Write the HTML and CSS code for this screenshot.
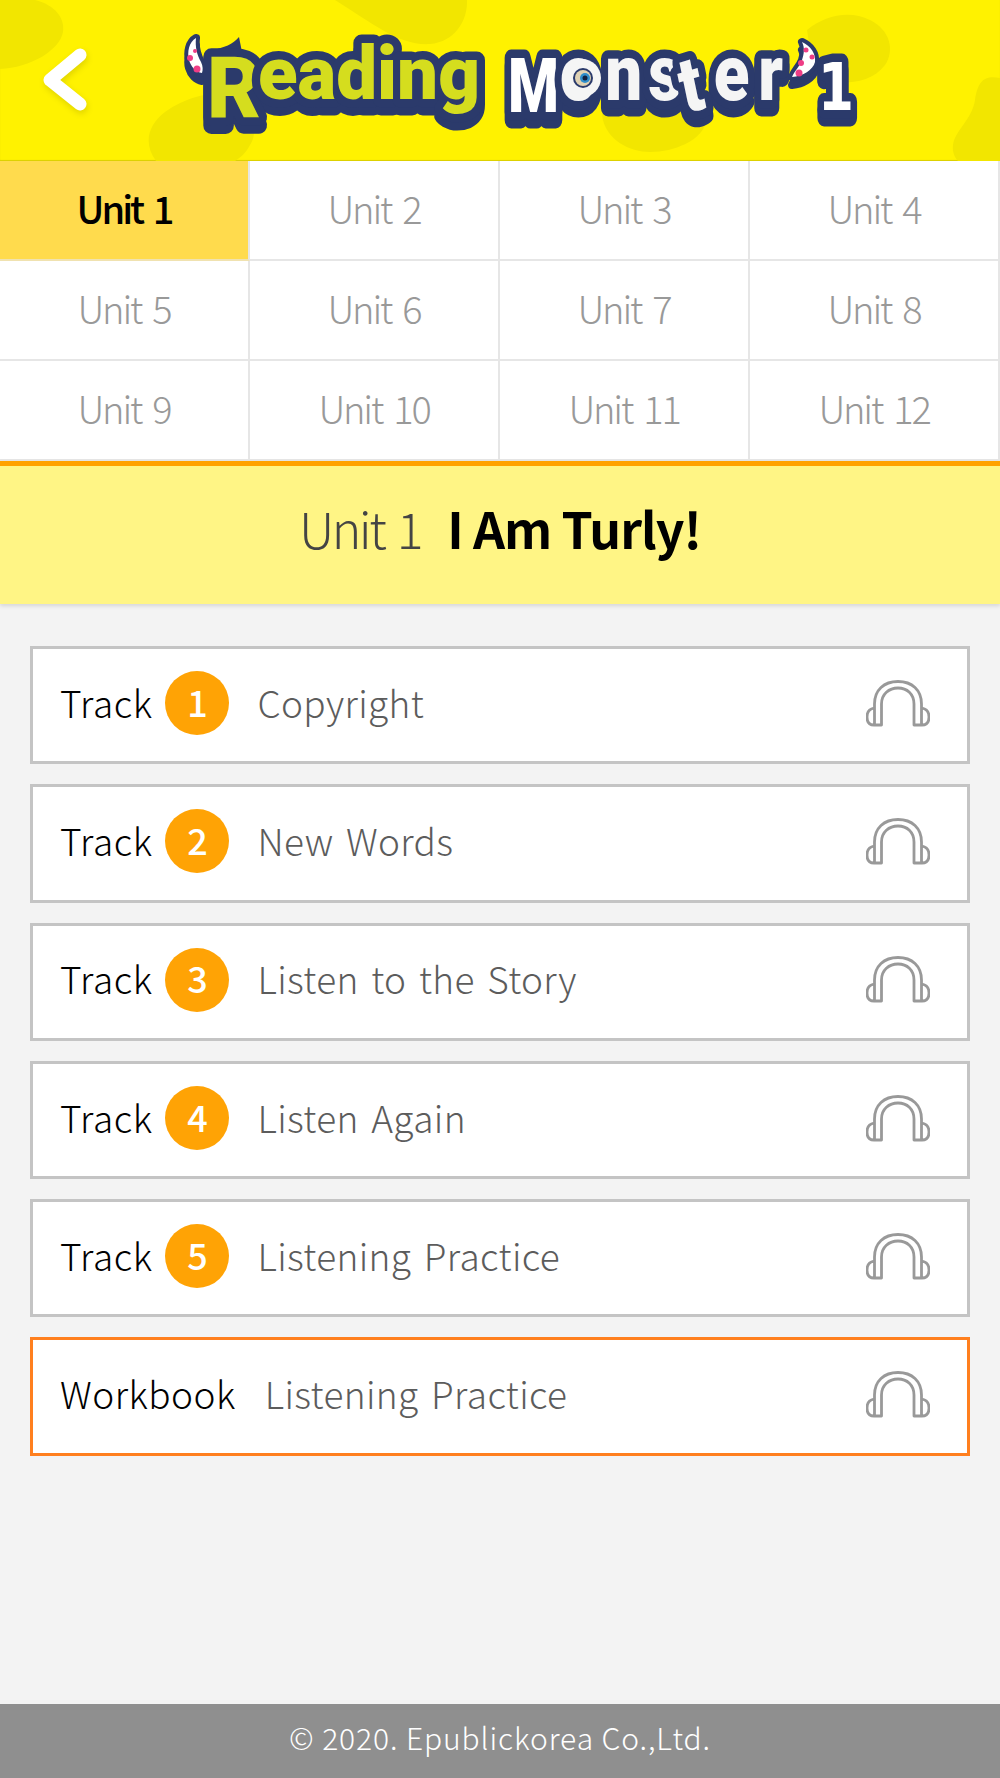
FILE: index.html
```html
<!DOCTYPE html>
<html lang="en">

<head>
    <meta charset="UTF-8">
    <meta name="viewport" content="width=device-width, initial-scale=1.0">
    <title>Reading Monster 1</title>
    <link rel="stylesheet" href="styles.css">
</head>

<body>
    <header class="top">
        <svg class="blobs" viewBox="0 0 1000 161" width="1000" height="161" aria-hidden="true">
            <path d="M0 0H35C55 5 65 18 63 32C60 50 30 68 0 69Z" />
            <path d="M335 0H467C468 20 455 42 430 44C400 46 375 25 335 0Z" />
            <path d="M156 161C143 143 148 125 165 112C185 98 205 92 240 92C250 110 260 130 250 145C246 153 240 158 235 161Z" />
            <path d="M807 30C825 15 850 10 870 20C890 30 895 50 885 65C870 85 840 85 815 80Z" />
            <path d="M602 115C605 140 630 152 650 152C675 152 700 140 705 125L700 100L610 100Z" />
            <path d="M1000 78C985 75 978 80 975 100C972 120 955 130 953 145C952 152 955 158 958 161H1000Z" />
        </svg>
        <a class="back">
            <svg viewBox="0 0 60 80" width="60" height="80" aria-hidden="true">
                <polyline points="40,14 10,39 40,63" fill="none" stroke="#fff" stroke-width="13" stroke-linecap="round" stroke-linejoin="round" />
            </svg>
        </a>
        <svg class="logo" viewBox="175 25 700 115" width="700" height="115" role="img" aria-label="Reading Monster 1">
            <g class="logo-base">
                <!-- horns and the tuft on the R -->
                <path class="horn" d="M196 38C189 42 187 52 189 60C191 67 196 72 202 73C203 70 203 66 201 62C197 55 195 47 196 38Z" />
                <path class="horn" d="M802 42C811 46 816 54 815 62C813 70 803 76 792 77C795 70 800 66 802 60C804 54 805 48 802 42Z" />
                <path class="tuft" d="M212 50C224 48 233 44 239 37L242 52Z" />
                <text class="logo-big" x="207" y="117" textLength="54" lengthAdjust="spacingAndGlyphs">R</text>
                <text class="logo-read" x="258" y="99" textLength="222" lengthAdjust="spacingAndGlyphs">eading</text>
                <text class="logo-m" x="508" y="112" textLength="51" lengthAdjust="spacingAndGlyphs">M</text>
                <text class="logo-mon" transform="translate(560 100) scale(.84 1)" x="0 54 105 149 183 236" y="0" rotate="0 0 0 -14 0 0" dy="0 0 0 14 -14 0">onster</text>
                <text class="logo-one" x="818" y="110" textLength="36" lengthAdjust="spacingAndGlyphs">1</text>
            </g>
            <path fill="#fff" d="M196 38C189 42 187 52 189 60C191 67 196 72 202 73C203 70 203 66 201 62C197 55 195 47 196 38Z" />
            <g fill="#ee3d86">
                <circle cx="190" cy="58" r="3" />
                <circle cx="197" cy="69" r="3.5" />
                <circle cx="195" cy="51" r="2" />
            </g>
            <path fill="#fff" d="M802 42C811 46 816 54 815 62C813 70 803 76 792 77C795 70 800 66 802 60C804 54 805 48 802 42Z" />
            <g fill="#ee3d86">
                <circle cx="806" cy="50" r="2.5" />
                <circle cx="812" cy="57" r="2.5" />
                <circle cx="801" cy="63" r="3" />
                <circle cx="799" cy="73" r="3.5" />
            </g>
            <!-- eye -->
            <circle cx="582" cy="78" r="19" fill="#f5f5f5" />
            <circle cx="583" cy="78" r="10" fill="#2b3a6b" />
            <circle cx="583" cy="78" r="8" fill="#e0d2b4" />
            <circle cx="585" cy="78" r="5" fill="#2f8ecb" />
            <circle cx="585" cy="78" r="2.5" fill="#12203f" />
        </svg>
    </header>

    <nav class="units">
        <a class="unit on">Unit 1</a>
        <a class="unit">Unit 2</a>
        <a class="unit">Unit 3</a>
        <a class="unit">Unit 4</a>
        <a class="unit">Unit 5</a>
        <a class="unit">Unit 6</a>
        <a class="unit">Unit 7</a>
        <a class="unit">Unit 8</a>
        <a class="unit">Unit 9</a>
        <a class="unit">Unit 10</a>
        <a class="unit">Unit 11</a>
        <a class="unit">Unit 12</a>
    </nav>

    <h1 class="banner"><span class="banner-unit">Unit 1</span><strong>I Am Turly!</strong></h1>

    <main class="list">
        <a class="item">
            <span class="label">Track</span><span class="num">1</span><span class="name">Copyright</span>
            <svg class="phones" viewBox="0 0 64 47" width="64" height="47" aria-hidden="true"><path d="M8.5 45V24C8.5 10 18 1.5 32 1.5S55.5 10 55.5 24V45H48V24C48 14 41 8 32 8S15.5 14 15.5 24V45ZM8 28C3 29 1 33 1 37C1 42 3 45 8 45M56 28C61 29 63 33 63 37C63 42 61 45 56 45" /></svg>
        </a>
        <a class="item">
            <span class="label">Track</span><span class="num">2</span><span class="name">New Words</span>
            <svg class="phones" viewBox="0 0 64 47" width="64" height="47" aria-hidden="true"><path d="M8.5 45V24C8.5 10 18 1.5 32 1.5S55.5 10 55.5 24V45H48V24C48 14 41 8 32 8S15.5 14 15.5 24V45ZM8 28C3 29 1 33 1 37C1 42 3 45 8 45M56 28C61 29 63 33 63 37C63 42 61 45 56 45" /></svg>
        </a>
        <a class="item">
            <span class="label">Track</span><span class="num">3</span><span class="name">Listen to the Story</span>
            <svg class="phones" viewBox="0 0 64 47" width="64" height="47" aria-hidden="true"><path d="M8.5 45V24C8.5 10 18 1.5 32 1.5S55.5 10 55.5 24V45H48V24C48 14 41 8 32 8S15.5 14 15.5 24V45ZM8 28C3 29 1 33 1 37C1 42 3 45 8 45M56 28C61 29 63 33 63 37C63 42 61 45 56 45" /></svg>
        </a>
        <a class="item">
            <span class="label">Track</span><span class="num">4</span><span class="name">Listen Again</span>
            <svg class="phones" viewBox="0 0 64 47" width="64" height="47" aria-hidden="true"><path d="M8.5 45V24C8.5 10 18 1.5 32 1.5S55.5 10 55.5 24V45H48V24C48 14 41 8 32 8S15.5 14 15.5 24V45ZM8 28C3 29 1 33 1 37C1 42 3 45 8 45M56 28C61 29 63 33 63 37C63 42 61 45 56 45" /></svg>
        </a>
        <a class="item">
            <span class="label">Track</span><span class="num">5</span><span class="name">Listening Practice</span>
            <svg class="phones" viewBox="0 0 64 47" width="64" height="47" aria-hidden="true"><path d="M8.5 45V24C8.5 10 18 1.5 32 1.5S55.5 10 55.5 24V45H48V24C48 14 41 8 32 8S15.5 14 15.5 24V45ZM8 28C3 29 1 33 1 37C1 42 3 45 8 45M56 28C61 29 63 33 63 37C63 42 61 45 56 45" /></svg>
        </a>
        <a class="item item-work">
            <span class="label">Workbook</span><span class="name">Listening Practice</span>
            <svg class="phones" viewBox="0 0 64 47" width="64" height="47" aria-hidden="true"><path d="M8.5 45V24C8.5 10 18 1.5 32 1.5S55.5 10 55.5 24V45H48V24C48 14 41 8 32 8S15.5 14 15.5 24V45ZM8 28C3 29 1 33 1 37C1 42 3 45 8 45M56 28C61 29 63 33 63 37C63 42 61 45 56 45" /></svg>
        </a>
    </main>

    <footer class="foot">© 2020. Epublickorea Co.,Ltd.</footer>
</body>

</html>
```

FILE: styles.css
```css
* {
    box-sizing: border-box;
}

body {
    font-family: "Noto Sans CJK KR", "Noto Sans", sans-serif;
    background-color: #f3f3f3;
    margin: 0;
    height: 1778px;
    display: flex;
    flex-direction: column;
}

.top {
    position: relative;
    height: 161px;
    background-color: #fff200;
    display: flex;
    align-items: center;
    overflow: hidden;
    box-shadow: inset 0 -1px 1px rgba(0, 0, 0, 0.15);
}

.blobs {
    position: absolute;
    left: 0;
    top: 0;
    fill: #f2e600;
}

.back {
    position: relative;
    width: 175px;
    padding-left: 40px;
    display: flex;
    filter: drop-shadow(1px 3px 3px rgba(0, 0, 0, 0.12));
}

.logo {
    position: relative;
    margin-top: 3px;
}

.logo text {
    font-family: Roboto, sans-serif;
    font-weight: 900;
    stroke: #2b3a6b;
    stroke-width: 17px;
    stroke-linejoin: round;
    paint-order: stroke;
}

.logo-base {
    filter: drop-shadow(0 8px 0 #2b3a6b);
}

.horn {
    fill: #2b3a6b;
    stroke: #2b3a6b;
    stroke-width: 8px;
    stroke-linejoin: round;
}

.tuft {
    fill: #2b3a6b;
}

.logo .logo-big {
    font-size: 86px;
    fill: #d5dd1e;
}

.logo .logo-read {
    font-size: 74px;
    fill: #d5dd1e;
}

.logo .logo-m {
    font-size: 76px;
    fill: #fff;
}

.logo .logo-mon {
    font-size: 78px;
    fill: #f5f5f5;
}

.logo .logo-one {
    font-family: "DejaVu Sans", sans-serif;
    font-weight: 700;
    font-size: 66px;
    fill: #fff;
}

.units {
    display: grid;
    grid-template-columns: repeat(4, 250px);
    grid-auto-rows: 100px;
}

.unit {
    display: flex;
    align-items: center;
    justify-content: center;
    border-right: 2px solid #e6e6e6;
    border-bottom: 2px solid #e6e6e6;
    background-color: #fff;
    color: #999;
    font-size: 38px;
    font-weight: 300;
    letter-spacing: -2.2px;
    word-spacing: 5px;
    padding-bottom: 6px;
}

.unit.on {
    background-color: #ffdb4d;
    color: #000;
    font-weight: 500;
    letter-spacing: -3px;
    border-bottom-color: #f0e2b0;
}

.banner {
    margin: 0;
    height: 143px;
    border-top: 5px solid #ffa100;
    padding-bottom: 16px;
    background-color: #fff585;
    box-shadow: 0 2px 4px rgba(0, 0, 0, 0.12);
    display: flex;
    align-items: center;
    justify-content: center;
    font-size: 50px;
    letter-spacing: -1px;
    color: #000;
}

.banner-unit {
    font-weight: 300;
    color: #444;
    letter-spacing: -2.5px;
    word-spacing: 4px;
    margin-right: 26px;
}

.banner strong {
    font-weight: 700;
}

.list {
    flex: 1;
    padding: 42px 30px 0;
    display: flex;
    flex-direction: column;
    gap: 20px;
}

.item {
    height: 118.3px;
    border: 3px solid #c4c4c4;
    background-color: #fff;
    padding: 0 37px 4px 27px;
    display: flex;
    align-items: center;
    font-size: 37px;
    font-weight: 300;
}

.item-work {
    border-color: #ff7f1e;
}

.label {
    color: #000;
    letter-spacing: 0.5px;
    padding-bottom: 3px;
}

.num {
    width: 64px;
    height: 64px;
    border-radius: 50%;
    background-color: #ffa305;
    color: #fff;
    font-size: 36px;
    font-weight: 500;
    margin: 0 28px 0 13px;
    display: flex;
    align-items: center;
    justify-content: center;
    padding-bottom: 5px;
}

.name {
    color: #5c5c5c;
    font-size: 37px;
    letter-spacing: 0.35px;
    word-spacing: 4px;
    padding-bottom: 3px;
}

.item-work .name {
    margin-left: 29px;
}

.phones {
    margin-left: auto;
    fill: none;
    stroke: #999;
    stroke-width: 2.8px;
    stroke-linejoin: round;
}

.foot {
    height: 74px;
    background-color: #8f8f8f;
    color: #fff;
    font-size: 30px;
    font-weight: 300;
    letter-spacing: 0.9px;
    padding-bottom: 8px;
    display: flex;
    align-items: center;
    justify-content: center;
}
```
